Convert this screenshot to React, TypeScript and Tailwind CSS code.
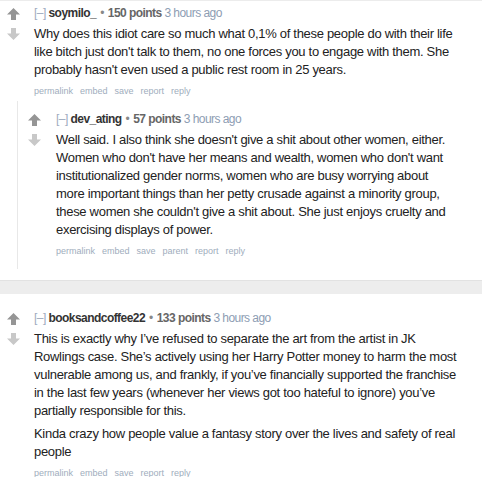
import React from 'react';

interface CommentData {
  author: string;
  points: number;
  age: string;
  // each paragraph is kept as the lines it breaks into on the page
  body: string[][];
  actions: string[];
}

const first: CommentData = {
  author: 'soymilo_',
  points: 150,
  age: '3 hours ago',
  body: [
    [
      'Why does this idiot care so much what 0,1% of these people do with their life',
      "like bitch just don't talk to them, no one forces you to engage with them. She",
      "probably hasn't even used a public rest room in 25 years.",
    ],
  ],
  actions: ['permalink', 'embed', 'save', 'report', 'reply'],
};

const reply: CommentData = {
  author: 'dev_ating',
  points: 57,
  age: '3 hours ago',
  body: [
    [
      "Well said. I also think she doesn't give a shit about other women, either.",
      "Women who don't have her means and wealth, women who don't want",
      'institutionalized gender norms, women who are busy worrying about',
      'more important things than her petty crusade against a minority group,',
      "these women she couldn't give a shit about. She just enjoys cruelty and",
      'exercising displays of power.',
    ],
  ],
  actions: ['permalink', 'embed', 'save', 'parent', 'report', 'reply'],
};

const third: CommentData = {
  author: 'booksandcoffee22',
  points: 133,
  age: '3 hours ago',
  body: [
    [
      'This is exactly why I’ve refused to separate the art from the artist in JK',
      'Rowlings case. She’s actively using her Harry Potter money to harm the most',
      'vulnerable among us, and frankly, if you’ve financially supported the franchise',
      'in the last few years (whenever her views got too hateful to ignore) you’ve',
      'partially responsible for this.',
    ],
    ['Kinda crazy how people value a fantasy story over the lives and safety of real', 'people'],
  ],
  actions: ['permalink', 'embed', 'save', 'report', 'reply'],
};

const Arrow = ({ down, color }: { down?: boolean; color: string }) => (
  <svg width="13" height="12" viewBox="0 0 13 12" className={down ? 'rotate-180' : ''}>
    <path d="M6.5 0 L13 6.5 H9 V12 H4 V6.5 H0 Z" fill={color} />
  </svg>
);

const Comment = ({ c, children, nested }: { c: CommentData; children?: React.ReactNode; nested?: boolean }) => (
  <div className="flex">
    <div className={`${nested ? 'w-[28px]' : 'w-[34px] pl-[7px]'} flex flex-col gap-[8px] pt-[3px] shrink-0`}>
      <Arrow color="#959595" />
      <Arrow down color="#c8c8c8" />
    </div>
    <div className="flex-1 min-w-0">
      <div className="text-[12px] leading-[16px] tracking-[-0.55px] whitespace-nowrap">
        <span className="text-[#9eabc0]">[–]</span>{' '}
        <span className="font-bold text-[#333]">{c.author}</span>
        <span className="text-[#888] mx-[4px]">•</span>
        <span className="font-bold text-[#666]">{c.points} points</span>{' '}
        <span className="text-[#8d9db3]">{c.age}</span>
      </div>
      <div className="mt-[4px] text-[13px] leading-[18px] tracking-[-0.3px] text-[#222] flex flex-col gap-[5px]">
        {c.body.map((p, i) => (
          <p key={i}>
            {p.map((line) => (
              <span key={line} className="block whitespace-nowrap">
                {line}
              </span>
            ))}
          </p>
        ))}
      </div>
      <div className="mt-[5px] flex gap-[7px] text-[9px] leading-[14px] text-[#a0adbd]">
        {c.actions.map((a) => (
          <span key={a}>{a}</span>
        ))}
      </div>
      {children}
    </div>
  </div>
);

export default function App() {
  return (
    <div className="w-[482px] h-[477px] overflow-hidden bg-white border-t border-[#ececec] font-['Liberation_Sans',Arial,sans-serif]">
      <div className="pt-[4px]">
        <Comment c={first} />
        <div className="ml-[17px] mt-[3px] border-l border-[#e8e8e8] pl-[10px] pt-[10px] pb-[11px]">
          <Comment c={reply} nested />
        </div>
      </div>
      <div className="mt-[11px] h-[14px] bg-[#ededed] border-t border-[#e2e2e2]" />
      <div className="pt-[16px]">
        <Comment c={third} />
      </div>
    </div>
  );
}
